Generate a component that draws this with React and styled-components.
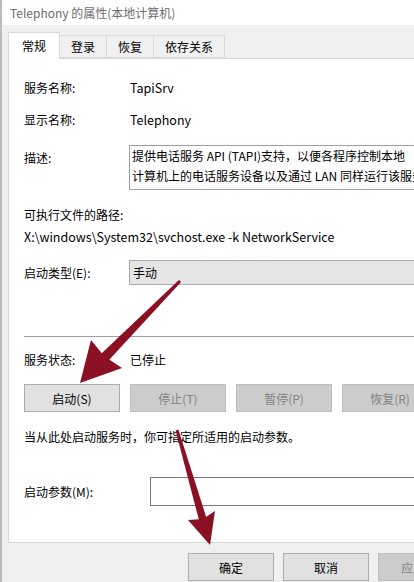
import React from "react";
import styled, { createGlobalStyle } from "styled-components";

const GlobalStyle = createGlobalStyle`
  html, body {
    margin: 0;
    padding: 0;
    width: 414px;
    height: 582px;
    overflow: hidden;
    background: #f0f0f0;
  }
  * {
    box-sizing: border-box;
  }
`;

const Window = styled.div`
  position: relative;
  width: 474px;
  height: 582px;
  overflow: hidden;
  display: flex;
  flex-direction: column;
  background: #f0f0f0;
  border-left: 2px solid #bcbcbc;
  font-family: "Noto Sans CJK SC", "Noto Sans", sans-serif;
  font-size: 12px;
  color: #000;
`;

const TitleBar = styled.div`
  height: 25px;
  display: flex;
  align-items: center;
  padding-left: 8px;
  background: #fff;
  color: #6d6d6d;
  font-size: 12px;
`;

const Content = styled.div`
  display: flex;
  flex-direction: column;
  padding: 8px 8px 0 6px;
`;

const TabStrip = styled.div`
  display: flex;
  align-items: flex-end;
  height: 25px;
  position: relative;
  z-index: 1;
`;

const Tab = styled.div`
  display: flex;
  align-items: center;
  justify-content: center;
  height: ${(p) => (p.active ? "27px" : "23px")};
  margin-bottom: ${(p) => (p.active ? "-1px" : "0")};
  margin-left: ${(p) => (p.first ? "0" : "-1px")};
  padding: ${(p) => (p.active ? "0 13px 2px" : "0 11px")};
  background: ${(p) => (p.active ? "#fff" : "#f0f0f0")};
  border: 1px solid #d9d9d9;
  border-bottom: ${(p) => (p.active ? "none" : "1px solid #d9d9d9")};
`;

const Panel = styled.div`
  display: flex;
  flex-direction: column;
  background: #fff;
  border: 1px solid #d9d9d9;
  padding: 19px 15px 36px 15px;
`;

const Row = styled.div`
  display: grid;
  grid-template-columns: ${(p) => p.labelWidth || 105}px 1fr;
  align-items: ${(p) => (p.top ? "start" : "center")};
  margin-top: ${(p) => p.gap || 0}px;
  min-height: 20px;
`;

const Label = styled.div`
  line-height: 20px;
  padding-top: ${(p) => (p.offset ? p.offset : 0)}px;
`;

const Value = styled.div`
  line-height: 20px;
  padding-left: 1px;
  font-size: ${(p) => (p.latin ? "12.5px" : "12px")};
`;

const Line = styled.div`
  line-height: 20px;
  margin-top: ${(p) => p.gap || 0}px;
  font-size: ${(p) => (p.latin ? "12.5px" : "12px")};
`;

const TextBox = styled.div`
  height: ${(p) => p.h}px;
  background: #fff;
  border: 1px solid ${(p) => p.border || "#a0a0a0"};
  padding: 0 2px;
  line-height: 20px;
  white-space: nowrap;
  overflow: hidden;
`;

const ComboBox = styled.div`
  height: 25px;
  display: flex;
  align-items: center;
  padding-left: 3px;
  background: #e5e5e5;
  border: 1px solid #acacac;
`;

const Separator = styled.div`
  height: 1px;
  margin-top: 51px;
  background: #a0a0a0;
`;

const ButtonRow = styled.div`
  display: grid;
  grid-template-columns: repeat(4, 96px);
  gap: 10px;
  margin-top: 14px;
`;

const Button = styled.div`
  height: 28px;
  width: ${(p) => p.w || 96}px;
  display: flex;
  align-items: center;
  justify-content: center;
  background: ${(p) => (p.disabled ? "#cccccc" : "#e1e1e1")};
  border: 1px solid ${(p) => (p.disabled ? "#bfbfbf" : "#adadad")};
  color: ${(p) => (p.disabled ? "#838383" : "#000")};
`;

const Footer = styled.div`
  display: flex;
  justify-content: flex-end;
  gap: 9px;
  margin-top: 10px;
  margin-right: 2px;
`;

const Annotation = styled.svg`
  position: absolute;
  left: -2px;
  top: 0;
  pointer-events: none;
`;

const arrowColor = "#8c1023";

export default function App() {
  return (
    <>
      <GlobalStyle />
      <Window>
        <TitleBar>Telephony 的属性(本地计算机)</TitleBar>
        <Content>
          <TabStrip>
            <Tab active first>常规</Tab>
            <Tab>登录</Tab>
            <Tab>恢复</Tab>
            <Tab>依存关系</Tab>
          </TabStrip>
          <Panel>
            <Row>
              <Label>服务名称:</Label>
              <Value latin>TapiSrv</Value>
            </Row>
            <Row gap={12}>
              <Label>显示名称:</Label>
              <Value latin>Telephony</Value>
            </Row>
            <Row gap={15} top>
              <Label offset={3}>描述:</Label>
              <TextBox h={45}>
                提供电话服务 API (TAPI)支持，以便各程序控制本地
                <br />
                计算机上的电话服务设备以及通过 LAN 同样运行该服务的
              </TextBox>
            </Row>
            <Line gap={15}>可执行文件的路径:</Line>
            <Line gap={2} latin>X:\windows\System32\svchost.exe -k NetworkService</Line>
            <Row gap={13}>
              <Label>启动类型(E):</Label>
              <ComboBox>手动</ComboBox>
            </Row>
            <Separator />
            <Row gap={13}>
              <Label>服务状态:</Label>
              <Value>已停止</Value>
            </Row>
            <ButtonRow>
              <Button>启动(S)</Button>
              <Button disabled>停止(T)</Button>
              <Button disabled>暂停(P)</Button>
              <Button disabled>恢复(R)</Button>
            </ButtonRow>
            <Line gap={15}>当从此处启动服务时，你可指定所适用的启动参数。</Line>
            <Row gap={30} labelWidth={126}>
              <Label>启动参数(M):</Label>
              <TextBox h={29} border="#7a7a7a" />
            </Row>
          </Panel>
          <Footer>
            <Button w={86}>确定</Button>
            <Button w={86}>取消</Button>
            <Button w={86} disabled>应用(A)</Button>
          </Footer>
        </Content>
        <Annotation width="474" height="582" viewBox="0 0 474 582">
          <polygon
            points="181.1,282.1 107.6,361.6 100.4,354.4 178.9,279.9"
            fill={arrowColor}
          />
          <polygon
            points="80,383 91,340 104,356 122,368"
            fill={arrowColor}
          />
          <polygon
            points="178.4,429.6 206.8,518.9 199.2,521.1 175.6,430.4"
            fill={arrowColor}
          />
          <polygon
            points="210,545 188,520 203,519 215,511"
            fill={arrowColor}
          />
        </Annotation>
      </Window>
    </>
  );
}
